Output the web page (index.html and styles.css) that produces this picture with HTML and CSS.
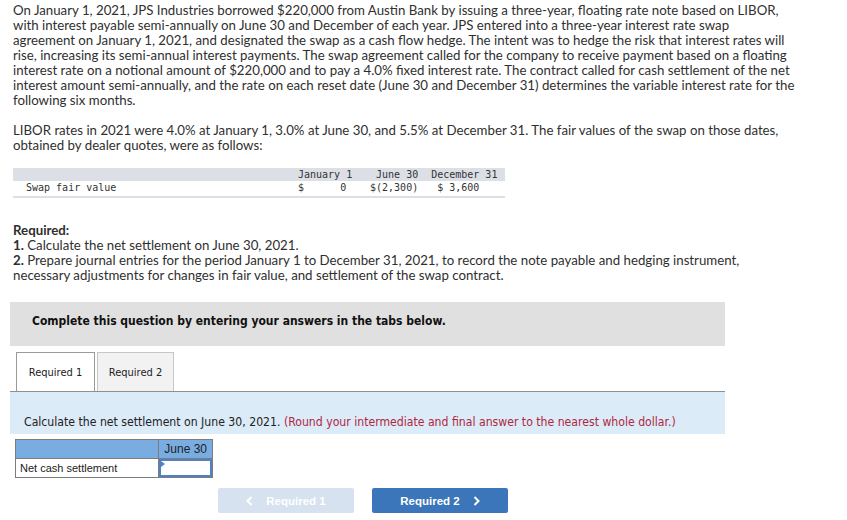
FILE: index.html
```html
<!DOCTYPE html>
<html lang="en">
<head>
<meta charset="utf-8">
<title>Interest rate swap</title>
<link rel="stylesheet" href="styles.css">
</head>
<body>
<div class="page">
  <p class="intro">On January 1, 2021, JPS Industries borrowed $220,000 from Austin Bank by issuing a three-year, floating rate note based on LIBOR, with interest payable semi-annually on June 30 and December of each year. JPS entered into a three-year interest rate swap agreement&nbsp;on January 1, 2021, and designated the swap as a cash flow hedge. The intent was to hedge the risk that interest rates will rise, increasing its semi-annual interest payments. The swap agreement called for the company to receive payment based on a floating interest rate on a notional amount of $220,000 and to pay a 4.0% fixed interest rate. The contract called for cash settlement of the net interest amount semi-annually, and the rate on each reset date (June 30 and December 31) determines the variable interest rate for the following six months.</p>
  <p class="intro">LIBOR rates in 2021 were 4.0% at January 1, 3.0% at June 30, and 5.5% at December 31. The fair values of the swap on those dates, obtained by dealer quotes, were as follows:</p>

  <table class="fv">
    <thead>
      <tr><th class="fv-label"></th><th class="fv-c1">January 1</th><th class="fv-c2">June 30</th><th class="fv-c3">December 31</th></tr>
    </thead>
    <tbody>
      <tr><td class="fv-label">Swap fair value</td><td class="fv-c1">$      0</td><td class="fv-c2">$(2,300)</td><td class="fv-c3"> $ 3,600</td></tr>
    </tbody>
  </table>

  <div class="required">
    <p class="req-title">Required:</p>
    <p><span class="num">1.</span> Calculate the net settlement on June 30, 2021.</p>
    <p><span class="num">2.</span> Prepare journal entries for the period January 1 to December 31, 2021, to record the note payable and hedging instrument, necessary adjustments for changes in fair value, and settlement of the swap contract.</p>
  </div>

  <div class="banner">Complete this question by entering your answers in the tabs below.</div>

  <div class="tabs">
    <div class="tab tab-active">Required 1</div>
    <div class="tab">Required 2</div>
  </div>

  <div class="panel">
    <p>Calculate the net settlement on June 30, 2021. <span class="hint">(Round your intermediate and final answer to the nearest whole dollar.)</span></p>
  </div>

  <table class="answer">
    <thead>
      <tr><th class="ans-label"></th><th class="ans-val">June 30</th></tr>
    </thead>
    <tbody>
      <tr><td class="ans-label">Net cash settlement</td><td class="ans-val ans-input"><span class="marker"></span></td></tr>
    </tbody>
  </table>

  <div class="nav">
    <div class="btn btn-prev">
      <svg class="chev" width="7" height="10" viewBox="0 0 7 10"><polyline points="5.5,1 1.5,5 5.5,9" fill="none" stroke="#fff" stroke-width="2"/></svg>
      <span>Required 1</span>
    </div>
    <div class="btn btn-next">
      <span>Required 2</span>
      <svg class="chev" width="7" height="10" viewBox="0 0 7 10"><polyline points="1.5,1 5.5,5 1.5,9" fill="none" stroke="#fff" stroke-width="2"/></svg>
    </div>
  </div>
</div>
</body>
</html>
```
FILE: styles.css
```css
* { box-sizing: border-box; }

body {
  margin: 0;
  background: #ffffff;
  color: #2f2f2f;
  font-family: Lato, "Open Sans", sans-serif;
}

.page {
  padding: 3px 0 0 10px;
  width: 820px;
}

p { margin: 0; }

.intro {
  margin-left: 3px;
  width: 782px;
  font-size: 13.25px;
  line-height: 15px;
}

.intro + .intro { margin-top: 15px; }

/* fair value table */
.fv {
  margin: 15px 0 0 3px;
  border-collapse: collapse;
  width: 492px;
  font-family: "DejaVu Sans Mono", "Liberation Mono", monospace;
  font-size: 10px;
  color: #333;
  border-bottom: 2px solid #dcdfe6;
}

.fv th, .fv td {
  padding: 0;
  font-weight: normal;
  white-space: pre;
  text-align: left;
}

.fv thead tr { background: #dcdfe6; height: 13px; line-height: 13px; }
.fv tbody tr { height: 16px; line-height: 14px; vertical-align: top; }

.fv-label { width: 285px; padding-left: 13px !important; }
.fv-c1 { width: 54px; }
.fv-c2 { width: 68px; text-align: right !important; padding-right: 2px !important; }
.fv-c3 { padding-left: 11px !important; }

/* required block */
.required {
  margin: 25px 0 0 3px;
  width: 786px;
  font-size: 13.25px;
  line-height: 15px;
}

.req-title, .num { font-weight: bold; }

/* banner */
.banner {
  margin-top: 19px;
  width: 715px;
  height: 44px;
  background: #e0e0e0;
  padding: 12px 0 0 22px;
  font-family: "DejaVu Sans Condensed", "DejaVu Sans", sans-serif;
  font-weight: bold;
  font-size: 12px;
  line-height: 14px;
  color: #111;
}

/* tabs */
.tabs {
  margin-top: 6px;
  width: 715px;
  display: flex;
  gap: 2px;
  padding-left: 6px;
  border-bottom: 1px solid #8f8f8f;
}

.tab {
  height: 39px;
  width: 77px;
  display: flex;
  align-items: center;
  justify-content: center;
  background: #f2f2f2;
  border: 1px solid #c6c6c6;
  border-bottom: none;
  font-family: "DejaVu Sans Condensed", "DejaVu Sans", sans-serif;
  font-size: 11px;
  color: #222;
}

.tab-active {
  width: 79px;
  background: #ffffff;
  border-color: #9a9a9a;
}

/* panel */
.panel {
  width: 715px;
  height: 42px;
  background: #dcebf8;
  padding: 23px 0 0 14px;
  font-family: "DejaVu Sans Condensed", "DejaVu Sans", sans-serif;
  font-size: 12.15px;
  line-height: 14px;
  color: #222;
}

.hint { color: #b0283f; }

/* answer table */
.answer {
  margin: 5px 0 0 5px;
  border-collapse: collapse;
  width: 198px;
  font-family: "Liberation Sans", Arial, sans-serif;
  font-size: 11px;
  color: #222;
}

.answer th, .answer td {
  border: 1px solid #7c7c7c;
  padding: 0;
  height: 19px;
}

.answer thead tr { background: #79ade2; }

.ans-label { width: 144px; text-align: left; padding-left: 4px !important; }
.ans-val { width: 54px; text-align: right; padding-right: 5px !important; font-weight: normal; font-size: 12px; }

.ans-input {
  position: relative;
  background: #fff;
  box-shadow: inset 0 0 0 2px #4f82c3;
}

.marker {
  position: absolute;
  left: 2px;
  top: 2px;
  width: 0;
  height: 0;
  border-top: 3px solid transparent;
  border-bottom: 3px solid transparent;
  border-left: 4px solid #4f82c3;
}

/* nav buttons */
.nav {
  margin: 10px 0 0 208px;
  display: flex;
  gap: 18px;
}

.btn {
  width: 136px;
  height: 25px;
  border-radius: 2px;
  display: flex;
  align-items: center;
  justify-content: center;
  gap: 13px;
  font-family: "Liberation Sans", Arial, sans-serif;
  font-weight: bold;
  font-size: 11.5px;
  color: #fff;
}

.btn-prev { background: #d6e2f0; }
.btn-next { background: #3a76b9; }

.chev { display: block; }
```
